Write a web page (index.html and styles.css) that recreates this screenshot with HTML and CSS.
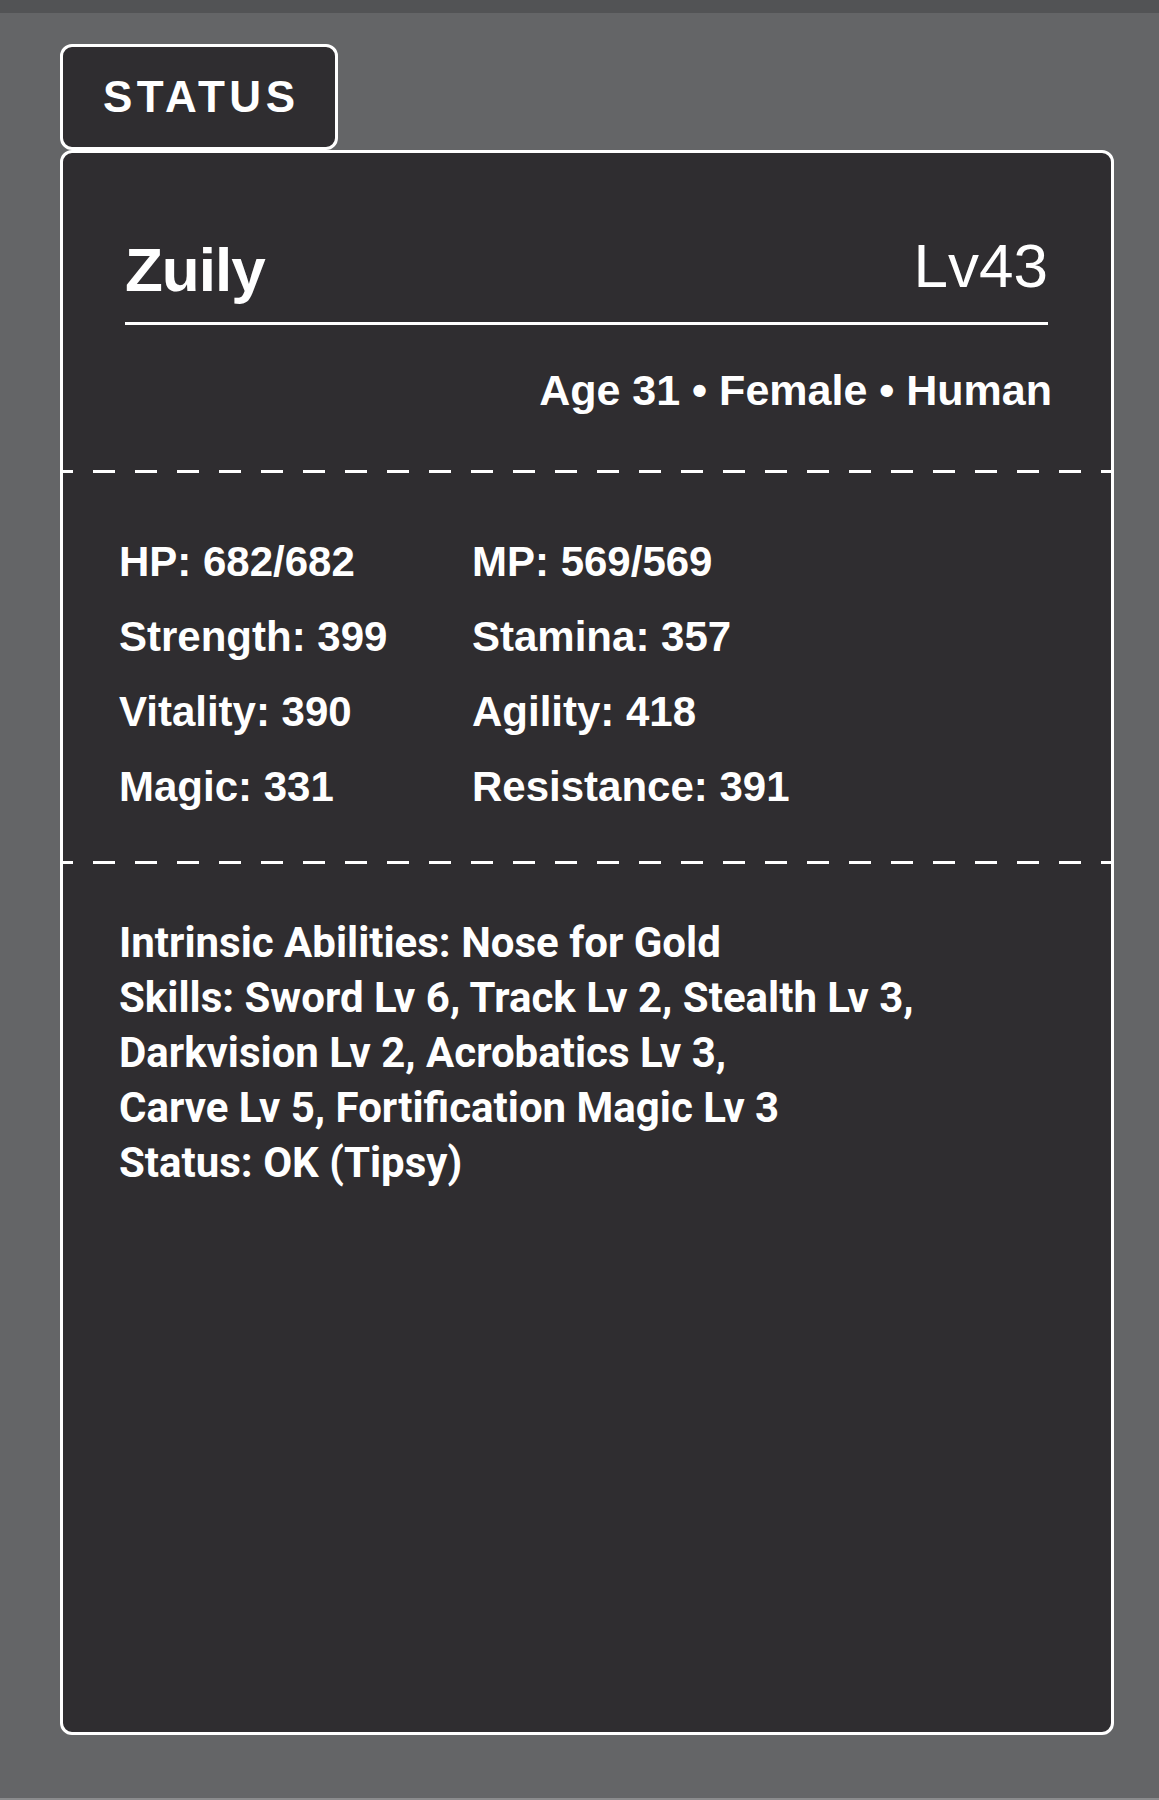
FILE: index.html
```html
<!DOCTYPE html>
<html lang="en">
<head>
<meta charset="utf-8">
<title>Status</title>
<link rel="stylesheet" href="styles.css">
</head>
<body>
<div class="topbar"></div>
<main class="page">
  <div class="tab"><span class="tab-label">STATUS</span></div>
  <section class="card">
    <header class="head">
      <div class="name-row">
        <h1 class="name">Zuily</h1>
        <span class="level">Lv43</span>
      </div>
      <p class="meta">Age 31 • Female • Human</p>
    </header>
    <div class="dash"></div>
    <div class="stats">
      <div>HP: 682/682</div>
      <div>MP: 569/569</div>
      <div>Strength: 399</div>
      <div>Stamina: 357</div>
      <div>Vitality: 390</div>
      <div>Agility: 418</div>
      <div>Magic: 331</div>
      <div>Resistance: 391</div>
    </div>
    <div class="dash"></div>
    <div class="abilities">
      <div>Intrinsic Abilities: Nose for Gold</div>
      <div>Skills: Sword Lv 6, Track Lv 2, Stealth Lv 3,</div>
      <div>Darkvision Lv 2, Acrobatics Lv 3,</div>
      <div>Carve Lv 5, Fortification Magic Lv 3</div>
      <div>Status: OK (Tipsy)</div>
    </div>
  </section>
</main>
<div class="bottombar"></div>
</body>
</html>
```
FILE: styles.css
```css
html, body {
  margin: 0;
  background: #646567;
}
body {
  font-family: "Liberation Sans", Arial, sans-serif;
  color: #fff;
  height: 1800px;
  display: flex;
  flex-direction: column;
}
.topbar {
  flex: none;
  height: 13px;
  background: #525355;
}
.bottombar {
  flex: none;
  height: 2px;
  background: #8a8b8d;
}
.page {
  flex: 1;
  padding: 31px 0 0 60px;
}
.tab {
  width: 278px;
  height: 106px;
  box-sizing: border-box;
  border: 3px solid #fff;
  border-radius: 12px;
  background: #2f2d30;
  display: flex;
  align-items: center;
  justify-content: center;
}
.tab-label {
  font-size: 44px;
  font-weight: 700;
  letter-spacing: 4.5px;
  line-height: 1;
  padding-left: 4.5px;
}
.card {
  width: 1054px;
  height: 1585px;
  box-sizing: border-box;
  border: 3px solid #fff;
  border-radius: 12px;
  background: #2f2d30;
}
.head {
  padding: 82px 63px 58px 62px;
}
.name-row {
  display: flex;
  justify-content: space-between;
  align-items: flex-end;
  border-bottom: 3px solid #fff;
  padding-bottom: 21px;
}
.name {
  margin: 0;
  font-size: 62px;
  line-height: 1;
  font-weight: 700;
  letter-spacing: -1px;
}
.level {
  font-size: 62px;
  line-height: 1;
  margin-bottom: 4px;
}
.meta {
  margin: 44px -4px 0 0;
  text-align: right;
  font-size: 43px;
  font-weight: 700;
  line-height: 1;
}
.dash {
  height: 3px;
  background-image: linear-gradient(to right, #fff 0 22px, transparent 22px 42px);
  background-size: 42px 3px;
  background-position: -12px 0;
  background-repeat: repeat-x;
}
.stats {
  display: grid;
  grid-template-columns: 353px 1fr;
  padding: 51px 0 37px 56px;
  font-size: 42px;
  font-weight: 700;
  line-height: 75px;
}
.abilities {
  padding: 51px 0 0 56px;
  font-family: Roboto, "Liberation Sans", sans-serif;
  font-weight: 700;
  font-size: 42px;
  line-height: 55px;
}
```
